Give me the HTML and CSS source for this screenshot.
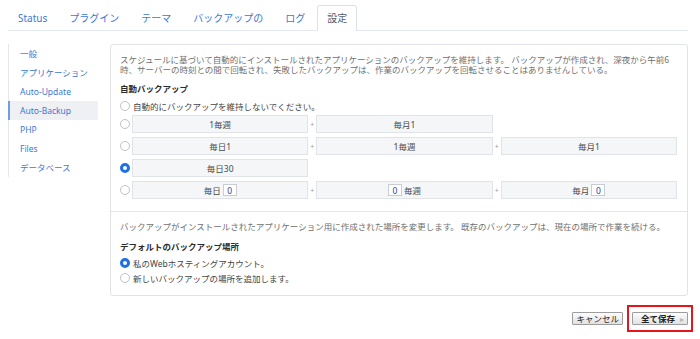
FILE: index.html
```html
<!DOCTYPE html>
<html lang="ja">
<head>
    <meta charset="UTF-8">
    <meta name="viewport" content="width=device-width, initial-scale=1.0">
    <title>設定 - Auto-Backup</title>
    <link rel="stylesheet" href="styles.css">
</head>
<body>

    <div class="page">
        <nav class="tabs">
            <a class="tab" href="#">Status</a>
            <a class="tab" href="#">プラグイン</a>
            <a class="tab" href="#">テーマ</a>
            <a class="tab" href="#">バックアップの</a>
            <a class="tab" href="#">ログ</a>
            <a class="tab active" href="#">設定</a>
        </nav>

        <div class="layout">
            <ul class="side-menu">
                <li><a href="#">一般</a></li>
                <li><a href="#">アプリケーション</a></li>
                <li><a href="#">Auto-Update</a></li>
                <li class="active"><a href="#">Auto-Backup</a></li>
                <li><a href="#">PHP</a></li>
                <li><a href="#">Files</a></li>
                <li><a href="#">データベース</a></li>
            </ul>

            <div class="content">
                <div class="panel">
                    <section class="panel-section">
                        <p class="desc">スケジュールに基づいて自動的にインストールされたアプリケーションのバックアップを維持します。 バックアップが作成され、深夜から午前6時、サーバーの時刻との間で回転され、失敗したバックアップは、作業のバックアップを回転させることはありませんしている。</p>

                        <h4 class="field-title">自動バックアップ</h4>
                        <label class="opt">
                            <input type="radio" name="schedule">
                            <span>自動的にバックアップを維持しないでください。</span>
                        </label>

                        <div class="sched-row">
                            <input type="radio" name="schedule">
                            <div class="sched-grid">
                                <div class="box">1毎週</div>
                                <span class="plus">+</span>
                                <div class="box">毎月1</div>
                            </div>
                        </div>

                        <div class="sched-row">
                            <input type="radio" name="schedule">
                            <div class="sched-grid">
                                <div class="box">毎日1</div>
                                <span class="plus">+</span>
                                <div class="box">1毎週</div>
                                <span class="plus">+</span>
                                <div class="box">毎月1</div>
                            </div>
                        </div>

                        <div class="sched-row">
                            <input type="radio" name="schedule" checked>
                            <div class="sched-grid">
                                <div class="box">毎日30</div>
                            </div>
                        </div>

                        <div class="sched-row">
                            <input type="radio" name="schedule">
                            <div class="sched-grid">
                                <div class="box">毎日<input class="num" type="text" value="0"></div>
                                <span class="plus">+</span>
                                <div class="box"><input class="num" type="text" value="0">毎週</div>
                                <span class="plus">+</span>
                                <div class="box">毎月<input class="num" type="text" value="0"></div>
                            </div>
                        </div>
                    </section>

                    <section class="panel-section">
                        <p class="desc">バックアップがインストールされたアプリケーション用に作成された場所を変更します。 既存のバックアップは、現在の場所で作業を続ける。</p>

                        <h4 class="field-title">デフォルトのバックアップ場所</h4>
                        <label class="opt">
                            <input type="radio" name="location" checked>
                            <span>私のWebホスティングアカウント。</span>
                        </label>
                        <label class="opt opt-tight">
                            <input type="radio" name="location">
                            <span>新しいバックアップの場所を追加します。</span>
                        </label>
                    </section>
                </div>

                <div class="actions">
                    <button type="button" class="btn">キャンセル</button>
                    <div class="highlight">
                        <button type="button" class="btn btn-save">全て保存<span class="arrow">&#9656;</span></button>
                    </div>
                </div>
            </div>
        </div>
    </div>

</body>
</html>
```

FILE: styles.css
```css
body {
    font-family: 'Noto Sans', 'Noto Sans CJK JP', sans-serif;
    font-size: 8.5px;
    background-color: #fff;
    color: #444;
    margin: 0;
    padding: 0;
}

* {
    box-sizing: border-box;
}

a {
    text-decoration: none;
    color: #3b78d6;
}

.page {
    padding: 5px 12px 0 8px;
}

/* tabs */

.tabs {
    display: flex;
    align-items: flex-end;
    gap: 2px;
    height: 26px;
    border-bottom: 1px solid #e3e7ee;
}

.tab {
    display: block;
    height: 25px;
    line-height: 24px;
    padding: 0 9px;
    font-size: 10px;
    border: 1px solid transparent;
    border-bottom: none;
}

.tab.active {
    height: 26px;
    margin-bottom: -1px;
    color: #555a6e;
    background-color: #fff;
    border-color: #dde2e9;
    border-radius: 3px 3px 0 0;
}

/* layout */

.layout {
    display: flex;
    align-items: flex-start;
    gap: 12px;
    margin-top: 13px;
}

.side-menu {
    list-style: none;
    margin: 0;
    padding: 0;
    width: 90px;
    flex: none;
    border-left: 1px solid #e4e7ec;
}

.side-menu li a {
    display: block;
    height: 19px;
    line-height: 19px;
    padding-left: 11px;
}

.side-menu li.active a {
    margin-left: -1px;
    padding-left: 10px;
    border-left: 2px solid #6c9de6;
    background-color: #eef0f4;
}

.content {
    flex: 1;
}

/* panel */

.panel {
    border: 1px solid #dfe3e9;
    border-radius: 3px;
}

.panel-section {
    padding: 10px 10px 12px 9px;
}

.panel-section + .panel-section {
    border-top: 1px solid #e3e6eb;
}

.desc {
    margin: 0;
    line-height: 10px;
    color: #707070;
}

.field-title {
    margin: 9px 0 0;
    line-height: 10px;
    font-size: 8.5px;
    font-weight: bold;
    color: #2b2b2b;
}

.panel-section + .panel-section .field-title {
    margin-top: 10px;
}

.opt {
    display: flex;
    align-items: center;
    gap: 3px;
    height: 10px;
    margin-top: 7px;
    color: #444;
}

.panel-section + .panel-section .opt {
    margin-top: 6px;
}

.panel-section + .panel-section .opt-tight {
    margin-top: 5px;
}

input[type="radio"] {
    appearance: none;
    -webkit-appearance: none;
    width: 10px;
    height: 10px;
    margin: 0;
    flex: none;
    border: 1px solid #bfc2c7;
    border-radius: 50%;
    background-color: #fff;
}

input[type="radio"]:checked {
    border: 3px solid #1f6fe5;
}

.sched-row {
    display: flex;
    align-items: center;
    gap: 2px;
    margin-top: 4px;
}

.sched-grid {
    flex: 1;
    display: grid;
    grid-template-columns: 1fr 8px 1fr 8px 1fr;
}

.box {
    display: flex;
    align-items: center;
    justify-content: center;
    gap: 2px;
    height: 18px;
    background-color: #f5f6f8;
    border: 1px solid #e0e3e8;
    color: #4a4a4a;
}

.plus {
    align-self: center;
    text-align: center;
    font-size: 7px;
    color: #999;
}

.num {
    width: 14px;
    height: 12px;
    padding: 0;
    margin: 0;
    border: 1px solid #c9ccd1;
    background-color: #fff;
    color: #2f3f9e;
    font: inherit;
    text-align: center;
}

/* buttons */

.actions {
    display: flex;
    justify-content: flex-end;
    align-items: center;
    gap: 4px;
    margin-top: 9px;
    margin-right: -5px;
}

.highlight {
    border: 2px solid #e8141b;
    padding: 5px 3px;
}

.btn {
    display: block;
    height: 13px;
    padding: 0 3px;
    font: inherit;
    line-height: 11px;
    color: #222;
    background: linear-gradient(#fdfdfd, #e2e2e2);
    border: 1px solid #9d9d9d;
    border-radius: 1px;
    cursor: pointer;
}

.btn-save {
    display: flex;
    align-items: center;
    gap: 5px;
    padding: 0 3px 0 8px;
    font-weight: bold;
}

.arrow {
    font-weight: normal;
    font-size: 8px;
    color: #b8b8b8;
}
```
